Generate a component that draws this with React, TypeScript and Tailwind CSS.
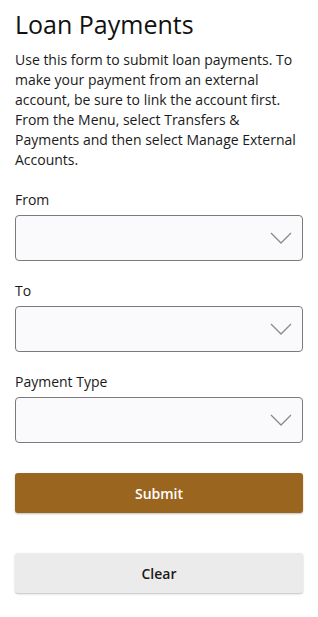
import React from 'react'

const font = { fontFamily: '"Open Sans", "Noto Sans", sans-serif' }

function Chevron() {
  return (
    <svg width="22" height="12" viewBox="0 0 22 12" fill="none" className="shrink-0">
      <path d="M1 1 L11 11 L21 1" stroke="#8a8a8a" strokeWidth="1.3" />
    </svg>
  )
}

function SelectField({ label }: { readonly label: string }) {
  return (
    <div className="flex flex-col">
      <label className="mb-[5px] text-[14px] leading-[20px] text-[#1a1a1a]">{label}</label>
      <div className="flex h-[46px] items-center justify-end rounded-[4px] border border-[#7a7a7a] bg-[#fafafc] pr-[10px]">
        <Chevron />
      </div>
    </div>
  )
}

export default function App() {
  return (
    <div className="min-h-[617px] w-[318px] bg-white px-[15px] pt-[8px]" style={font}>
      <h1 className="text-[25px] leading-[32px] text-[#111]">Loan Payments</h1>
      <p className="mt-[10px] text-[14px] leading-[20px] text-[#1a1a1a]">
        Use this form to submit loan payments. To make your payment from an external account, be sure to link the
        account first. From the Menu, select Transfers &amp; Payments and then select Manage External Accounts.
      </p>
      <div className="mt-[20px] flex flex-col gap-[20px]">
        <SelectField label="From" />
        <SelectField label="To" />
        <SelectField label="Payment Type" />
      </div>
      <button
        type="button"
        className="mt-[30px] h-[40px] w-full rounded-[3px] bg-[#9a661f] text-[14px] font-semibold text-white shadow-[0_1px_2px_rgba(0,0,0,0.25)]"
      >
        Submit
      </button>
      <button
        type="button"
        className="mt-[40px] h-[40px] w-full rounded-[3px] bg-[#ebebeb] text-[14px] font-semibold text-[#1a1a1a] shadow-[0_1px_2px_rgba(0,0,0,0.25)]"
      >
        Clear
      </button>
    </div>
  )
}
